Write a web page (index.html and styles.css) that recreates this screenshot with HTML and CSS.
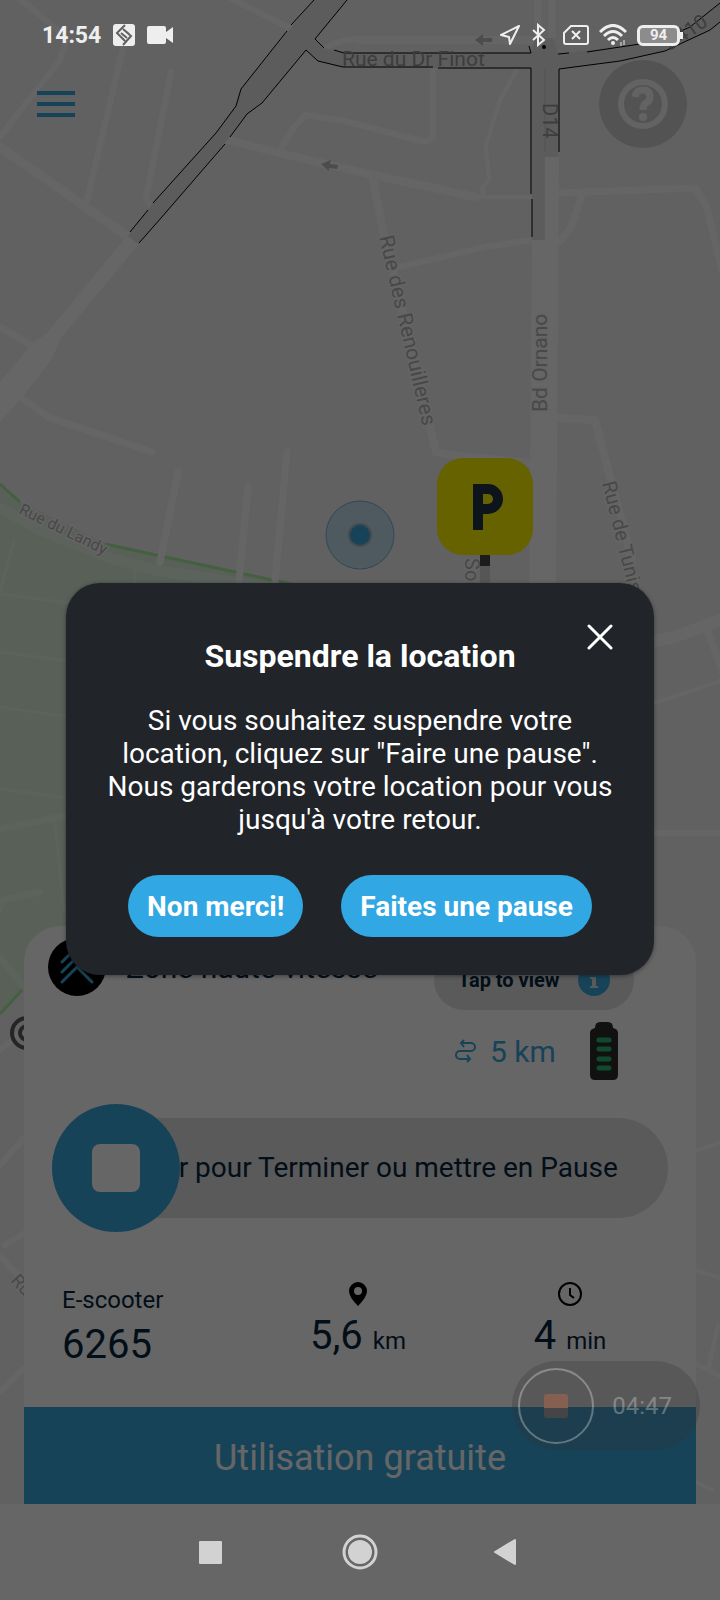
FILE: index.html
```
<!DOCTYPE html>
<html lang="fr">
<head>
  <meta charset="UTF-8">
  <meta name="viewport" content="width=device-width, initial-scale=1">
  <title>Suspendre la location</title>
  <link rel="stylesheet" href="styles.css">
</head>
<body>
  <div class="screen">
    <svg class="map" viewBox="0 0 720 1600" preserveAspectRatio="xMidYMin slice" aria-hidden="true">
      <!-- park -->
      <path class="park" d="M0 484 20 502 105 543 235 572 310 588V926H72L24 988 0 1014Z"/>
      <path class="park-line" d="M0 484 20 502M105 544 235 572 310 588M24 988 0 1014"/>
      <g class="park-road">
        <path stroke-width="11" d="M0 508 40 530 110 558 160 571 300 592"/>
        <path stroke-width="7" d="M0 829 70 815M0 958 24 987M-2 901 40 892"/>
        <path stroke-width="3" d="M14 540 0 592M135 570V583M0 594 70 603M0 652 70 661M0 707 70 717M0 789 70 798M55 822 64 912M4 901-2 916"/>
      </g>

      <!-- small streets -->
      <g class="road">
        <path stroke-width="7" d="M0 327 36 348M20 397 48 417 152 452M178 472 160 562M248 487 239 582M287 452 275 582"/>
        <path stroke-width="6" d="M16-4 58 30 66 42 60 60 0 137M123 48 87 200M171 72 146 198 152 208M226-4 290 28M324 50Q334 40 360 39"/>
        <path stroke-width="9" d="M0 147 130 238"/>
        <path stroke-width="8" d="M228 140 275 152 360 172 475 197M372 175 385 240 436 452 450 455 530 463M360 40H540"/>
        <path stroke-width="6" d="M280 150 292 130 305 115 345 121 360 125 425 142 433 138V68M395 268 485 247 533 240"/>
        <path stroke-width="4" d="M475 197H531M517 70 500 100 486 145 489 180 482 188 484 197M654 703 720 681"/>
        <path stroke-width="7" d="M538 0V36M552 0V36M559 193 695 188 706 205 722 270M583 192 572 225 560 242M708 632 724 676"/>
        <path stroke-width="8" d="M556 418 595 420 632 560"/>
        <path stroke-width="12" d="M650 642 675 637 722 619"/>
        <path stroke-width="6" d="M654 833H720M0 1050 24 1031M0 1165 24 1138M5 1245 28 1231M0 1256 26 1284M0 1392 24 1368"/>
        <path stroke-width="4" d="M696 1151 720 1143M696 1270 720 1278M718 1325 709 1366M696 1364 720 1376M696 1482 712 1490"/>
      </g>
      <path fill="#fff" d="M127 236 138 245 61 338 51 360 24 395 0 422V382L33 343 47 333ZM532 240H545V157H559L556 600H529Z"/>

      <!-- departmental roads -->
      <path class="main" d="M314 0H347L315 39 324 48 343 53H531L535 38 553 38 558 54 640 44 690 27 720 3V22L710 30 665 51 620 61 558 69V157H545V240H532V69L343 67 318 61 306 50 262 103 247 114 230 137 139 244 128 236 153 203 216 133 236 106 241 89Z"/>
      <path class="main-line" d="M314 0 291 25M287 31 241 89 236 106 216 133 153 203M148 210 130 232M347 0 315 39 324 48M334 50 344 53H531L529 46M225 144 161 218 139 243M230 137 247 114 262 103 306 50 318 61 343 67H433M438 68H531V194M532 199V237M558 54 569 53M587 52 640 44 665 38 690 27 720 3M559 152V69L620 61 665 51 710 30 720 22"/>
      <path stroke="#cfcfcf" fill="none" d="M545 69V152"/>
      <circle cx="544" cy="47" r="1" fill="none" stroke="#000" stroke-width="2"/>
      <path class="one-way" d="M475 40l8-6v4h9v4h-9v4zM321 164l10-4-1 4 8 1-1 4-8-1v3z"/>

      <!-- street names -->
      <g class="street">
        <text class="dark" x="342" y="66" font-size="21">Rue du Dr Finot</text>
        <text class="dark" font-size="20" transform="translate(543 103) rotate(90)">D14</text>
        <text class="dark" font-size="20" transform="translate(670 51) rotate(-34)">D410</text>
        <text font-size="21" transform="translate(379 237) rotate(77)">Rue des Renouilleres</text>
        <text font-size="21" transform="translate(547 412) rotate(-90)">Bd Ornano</text>
        <text font-size="20" transform="translate(602 483) rotate(76)">Rue de Tunisie</text>
        <text font-size="16" transform="translate(18 513) rotate(26)">Rue du Landy</text>
        <text font-size="20" transform="translate(465 558) rotate(90)">Sorin</text>
        <text font-size="18" transform="translate(10 1281) rotate(48)">Rue</text>
      </g>

      <!-- landmark -->
      <g fill="none" stroke="#5c5c5c" stroke-width="4">
        <circle cx="27" cy="1033" r="15"/>
        <circle cx="27" cy="1033" r="7"/>
      </g>

      <!-- user position -->
      <circle cx="360" cy="535" r="34" fill="#31a7e3" fill-opacity=".24" stroke="#7fb3cd"/>
      <circle cx="360" cy="535" r="12" fill="#000" fill-opacity=".16"/>
      <circle cx="360" cy="535" r="10" fill="#3aa8de"/>

      <!-- parking marker -->
      <path fill="#464646" d="M480 555h10v11h-10z"/>
      <path fill="#d6d6da" d="M480 566h10v30h-10z"/>
      <rect x="437" y="458" width="96" height="97" rx="26" fill="#fff500"/>
      <path fill="#233246" fill-rule="evenodd" d="M473 484h15a15 15 0 0 1 0 30h-5v16h-10zM483 494v10h5a5 5 0 0 0 0-10z"/>
    </svg>

    <header class="status">
      <span class="clock">14:54</span>
      <svg width="22" height="22" viewBox="0 0 22 22" aria-hidden="true">
        <rect width="22" height="22" rx="3" fill="#eee"/>
        <path d="M12 1 4 9l8 8M10 5l8 7-8 9M8 9l6 5M10 5l6 5" fill="none" stroke="#606060" stroke-width="2"/>
      </svg>
      <svg width="26" height="18" viewBox="0 0 26 18" aria-hidden="true">
        <path fill="#eee" d="M2 0h15q2 0 2 2v4l7-5v16l-7-5v4q0 2-2 2H2q-2 0-2-2V2q0-2 2-2z"/>
      </svg>
      <div class="status-right">
        <svg width="22" height="22" viewBox="0 0 22 22" aria-hidden="true">
          <path d="M20 2 2 11l8 2 1 7z" fill="none" stroke="#eee" stroke-width="2" stroke-linejoin="round"/>
        </svg>
        <svg width="16" height="24" viewBox="0 0 16 24" aria-hidden="true">
          <path d="M2 7l11 10-6 5V2l6 5L2 17" fill="none" stroke="#eee" stroke-width="2"/>
        </svg>
        <svg class="sim" width="26" height="20" viewBox="0 0 26 20" aria-hidden="true">
          <path d="M8 1h15q2 0 2 2v14q0 2-2 2H3q-2 0-2-2V8zM9 6l8 8M17 6l-8 8" fill="none" stroke="#eee" stroke-width="2"/>
        </svg>
        <svg width="28" height="22" viewBox="0 0 28 22" aria-hidden="true">
          <path d="M1 8q13-13 26 0M5 12q9-9 18 0M9 16q5-5 10 0" fill="none" stroke="#eee" stroke-width="3"/>
          <circle cx="14" cy="19" r="2" fill="#eee"/>
          <path d="M22 18v4M25 16v5" stroke="#eee"/>
        </svg>
        <span class="battery"><span class="battery-level">94</span></span>
      </div>
    </header>

    <div class="topbar">
      <button class="menu" type="button" aria-label="Menu">
        <svg width="38" height="26" viewBox="0 0 38 26"><path d="M0 2h38M0 13h38M0 24h38" stroke="#3aa8de" stroke-width="4"/></svg>
      </button>
      <button class="help" type="button" aria-label="Aide">
        <svg width="50" height="50" viewBox="0 0 50 50">
          <circle cx="25" cy="25" r="22" fill="none" stroke="#f7f7f7" stroke-width="6"/>
          <path d="M17 18Q18 11 25 11T32 18Q32 22 28 24 25 26 25 31" fill="none" stroke="#f7f7f7" stroke-width="7"/>
          <circle cx="25" cy="38" r="4" fill="#f7f7f7"/>
        </svg>
      </button>
    </div>

    <main class="sheet">
      <div class="sheet-top">
        <div class="zone">
          <svg width="58" height="58" viewBox="0 0 58 58" aria-hidden="true">
            <circle cx="29" cy="29" r="29"/>
            <path d="M14 24 29 9l15 15M14 34 29 19l15 15M14 44 29 29l15 15" fill="none" stroke="#3aa8de" stroke-width="3" stroke-linecap="round"/>
          </svg>
          <span>Zone haute vitesse</span>
        </div>
        <div class="details">
          <button class="tap" type="button">
            Tap to view
            <svg width="32" height="32" viewBox="0 0 32 32" aria-hidden="true">
              <circle cx="16" cy="16" r="16" fill="#3aa8de"/>
              <path fill="#e1e1e1" d="M14 7h4v4h-4zM12 13h6v9h2v2h-8v-2h2v-7h-2z"/>
            </svg>
          </button>
          <div class="range">
            <svg width="22" height="24" viewBox="0 0 22 24" aria-hidden="true">
              <path d="M9 1 6 4l3 4M6 4h10a4 4 0 0 1 0 8H5a4 4 0 0 0 0 8h10M12 16l3 4-3 3" fill="none" stroke="#3aa8de" stroke-width="2"/>
            </svg>
            <span>5 km</span>
            <svg class="charge" width="28" height="58" viewBox="0 0 28 58" aria-hidden="true">
              <path fill="#2c2c2c" d="M10 0h8q5 0 5 6 5 1 5 5v42q0 5-5 5H5q-5 0-5-5V11q0-4 5-5 0-6 5-6z"/>
              <path d="M9 18h10M9 27h10M9 37h10M9 46h10" stroke="#2bb673" stroke-width="5" stroke-linecap="round"/>
            </svg>
          </div>
        </div>
      </div>

      <div class="slide">
        <div class="slide-track">Glisser pour Terminer ou mettre en Pause</div>
        <button class="slide-thumb" type="button" aria-label="Terminer ou mettre en pause"></button>
      </div>

      <div class="stats">
        <div class="stat stat-vehicle">
          <span class="label">E-scooter</span>
          <span class="value">6265</span>
        </div>
        <div class="stat">
          <svg width="24" height="24" viewBox="0 0 24 24" aria-hidden="true">
            <path fill-rule="evenodd" d="M12 0a9 9 0 0 1 9 9q0 6-9 15Q3 15 3 9a9 9 0 0 1 9-9zm0 5a4 4 0 1 0 0 8 4 4 0 0 0 0-8z"/>
          </svg>
          <span class="value">5,6 <small>km</small></span>
        </div>
        <div class="stat">
          <svg width="24" height="24" viewBox="0 0 24 24" aria-hidden="true">
            <path d="M12 6v7l4 3" fill="none" stroke="#000" stroke-width="2"/>
            <circle cx="12" cy="12" r="11" fill="none" stroke="#000" stroke-width="2"/>
          </svg>
          <span class="value">4 <small>min</small></span>
        </div>
      </div>

      <div class="free">Utilisation gratuite</div>
    </main>

    <nav class="navbar">
      <button type="button" aria-label="Applications récentes">
        <svg width="36" height="36" viewBox="0 0 36 36"><rect x="6" y="7" width="23" height="23" rx="1" fill="#d2d2d2"/></svg>
      </button>
      <button type="button" aria-label="Accueil">
        <svg width="36" height="36" viewBox="0 0 36 36">
          <circle cx="18" cy="18" r="16" fill="none" stroke="#d2d2d2" stroke-width="3"/>
          <circle cx="18" cy="18" r="12" fill="#d2d2d2"/>
        </svg>
      </button>
      <button type="button" aria-label="Retour">
        <svg width="36" height="36" viewBox="0 0 36 36"><path d="M4 18 24 6v24z" fill="#d2d2d2" stroke="#d2d2d2" stroke-width="2" stroke-linejoin="round"/></svg>
      </button>
    </nav>

    <div class="backdrop">
      <section class="modal" role="dialog" aria-modal="true" aria-labelledby="modal-title">
        <button class="close" type="button" aria-label="Fermer">
          <svg width="26" height="26" viewBox="0 0 26 26"><path d="M2 2l22 22M24 2 2 24" stroke="#fff" stroke-width="3" stroke-linecap="round"/></svg>
        </button>
        <h1 id="modal-title">Suspendre la location</h1>
        <p>Si vous souhaitez suspendre votre location, cliquez sur "Faire une pause". Nous garderons votre location pour vous jusqu'à votre retour.</p>
        <div class="actions">
          <button type="button">Non merci!</button>
          <button type="button">Faites une pause</button>
        </div>
      </section>
    </div>

    <!-- screen recorder bubble -->
    <div class="recorder">
      <button class="stop" type="button" aria-label="Arrêter l'enregistrement"></button>
      <span>04:47</span>
    </div>
  </div>
</body>
</html>
```
FILE: styles.css
```
:root {
  --blue: #3aa8de;
  --ink: #06263f;
  --grey: #e1e1e1;
}
* {
  box-sizing: border-box;
}
body {
  margin: 0;
  font-family: Roboto, sans-serif;
  color: var(--ink);
}
button {
  margin: 0;
  padding: 0;
  border: 0;
  background: none;
  font-family: inherit;
  color: inherit;
  cursor: pointer;
}
svg {
  display: block;
  flex: none;
}
.screen {
  position: relative;
  display: flex;
  flex-direction: column;
  min-height: 100vh;
  overflow: hidden;
  background: #f2f2f2;
}

/* map */
.map {
  position: absolute;
  top: 0;
  left: 0;
  width: 100%;
  height: 100%;
}
.park { fill: #dbefdb; }
.park-line { fill: none; stroke: #a9f09d; stroke-width: 3; }
.park-road { fill: none; stroke: #e6f6e6; stroke-linecap: round; }
.road { fill: none; stroke: #fdfdfd; stroke-linecap: round; stroke-linejoin: round; }
.main { fill: #e5e5e5; }
.main-line { fill: none; stroke: #000; stroke-width: 1; }
.one-way { fill: #bdbdbd; }
.street text {
  fill: #b4b4b4;
  stroke: #fafafa;
  stroke-width: 3px;
  paint-order: stroke;
}
.street .dark {
  fill: #999;
  stroke: none;
}

/* status bar */
.status {
  position: relative;
  z-index: 3;
  display: flex;
  align-items: center;
  gap: 12px;
  height: 60px;
  padding: 10px 37px 0 42px;
  color: #eee;
}
.clock {
  font-size: 23px;
  font-weight: bold;
}
.status-right {
  display: flex;
  align-items: center;
  gap: 10px;
  margin-left: auto;
}
.sim {
  margin: 0 0 0 6px;
}
.battery {
  display: flex;
  align-items: center;
}
.battery::after {
  content: "";
  width: 3px;
  height: 7px;
  background: #eee;
}
.battery-level {
  width: 43px;
  height: 21px;
  border: 3px solid #eee;
  border-radius: 6px;
  background: #8c8c8c;
  font-size: 15px;
  font-weight: bold;
  line-height: 15px;
  text-align: center;
}

.topbar {
  position: relative;
  display: flex;
  align-items: center;
  justify-content: space-between;
  padding: 0 33px 0 37px;
}
.help {
  display: flex;
  align-items: center;
  justify-content: center;
  width: 88px;
  height: 88px;
  border-radius: 50%;
  background: #d0d0d0;
}

/* bottom sheet */
.sheet {
  position: relative;
  margin: auto 24px 0;
  border-radius: 36px 36px 0 0;
  background: #fff;
}
.sheet-top {
  display: flex;
  justify-content: space-between;
  padding: 12px 62px 24px 24px;
}
.zone {
  display: flex;
  align-items: center;
  align-self: flex-start;
  gap: 20px;
  font-size: 30px;
}
.details {
  width: 200px;
  padding-top: 12px;
}
.tap {
  display: flex;
  align-items: center;
  justify-content: space-between;
  width: 100%;
  height: 60px;
  padding: 0 24px;
  border-radius: 30px;
  background: var(--grey);
  font-size: 20px;
  font-weight: bold;
}
.range {
  display: flex;
  align-items: center;
  gap: 13px;
  padding: 12px 16px 0 21px;
  color: var(--blue);
  font-size: 30px;
}
.charge {
  margin-left: auto;
}
.slide {
  position: relative;
  display: flex;
  align-items: center;
  height: 128px;
  margin: 0 28px;
}
.slide-track {
  flex: 1;
  border-radius: 50px;
  background: var(--grey);
  font-size: 28px;
  line-height: 100px;
  text-align: center;
  white-space: nowrap;
}
.slide-thumb {
  position: absolute;
  top: 0;
  left: 0;
  display: flex;
  align-items: center;
  justify-content: center;
  width: 128px;
  height: 128px;
  border-radius: 50%;
  background: var(--blue);
}
.slide-thumb::before {
  content: "";
  width: 48px;
  height: 48px;
  border-radius: 8px;
  background: #fff;
}
.stats {
  display: grid;
  grid-template-columns: 1fr 212px 212px;
  padding: 50px 20px 38px 38px;
}
.stat {
  display: flex;
  flex-direction: column;
  align-items: center;
  gap: 6px;
}
.stat-vehicle {
  align-items: flex-start;
  padding-top: 3px;
}
.label {
  font-size: 24px;
  line-height: 30px;
}
.value {
  font-size: 40px;
  line-height: 48px;
}
.value small {
  font-size: 24px;
}
.free {
  padding-top: 6px;
  background: var(--blue);
  color: #fff;
  font-size: 36px;
  line-height: 91px;
  text-align: center;
}

/* system navigation */
.navbar {
  position: relative;
  z-index: 3;
  display: flex;
  align-items: center;
  justify-content: center;
  gap: 113px;
  height: 96px;
  background: #666;
}

/* dialog */
.backdrop {
  position: absolute;
  z-index: 2;
  top: 0;
  right: 0;
  bottom: 0;
  left: 0;
  display: flex;
  align-items: center;
  padding: 0 66px 42px;
  background: rgba(0, 0, 0, 0.6);
}
.modal {
  position: relative;
  flex: 1;
  padding: 54px 36px 38px;
  border-radius: 34px;
  background: #212429;
  box-shadow: 0 1px 4px rgba(0, 0, 0, 0.4);
  color: #fff;
  text-align: center;
}
.modal h1 {
  margin: 0 0 29px;
  font-size: 32px;
  line-height: 38px;
}
.modal p {
  margin: 0 0 39px;
  font-size: 28px;
  line-height: 33px;
}
.close {
  position: absolute;
  top: 41px;
  right: 41px;
}
.actions {
  display: flex;
  justify-content: center;
  gap: 38px;
}
.actions button {
  height: 62px;
  padding: 0 19px;
  border-radius: 31px;
  background: #31a7e3;
  font-size: 28px;
  font-weight: bold;
}

.recorder {
  position: absolute;
  z-index: 4;
  right: 20px;
  bottom: 150px;
  display: flex;
  align-items: center;
  justify-content: space-between;
  width: 188px;
  height: 89px;
  padding: 0 28px 0 6px;
  border-radius: 45px;
  background: rgba(48, 48, 48, 0.25);
  color: rgba(255, 255, 255, 0.3);
  font-size: 24px;
}
.stop {
  display: flex;
  align-items: center;
  justify-content: center;
  width: 76px;
  height: 76px;
  border: 2px solid rgba(255, 255, 255, 0.3);
  border-radius: 50%;
}
.stop::before {
  content: "";
  width: 24px;
  height: 24px;
  border-radius: 3px;
  background: linear-gradient(#855f4f 14px, #454548 14px);
}
```
